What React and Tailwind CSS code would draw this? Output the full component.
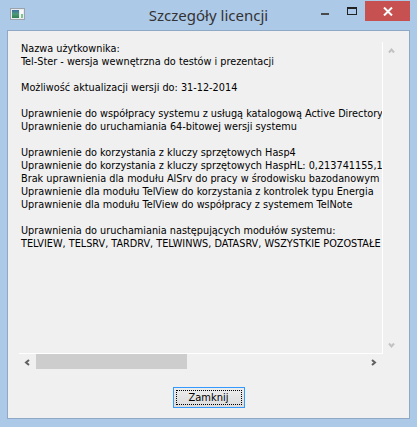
import React from "react";

const lines = [
  "Nazwa użytkownika:",
  "Tel-Ster - wersja wewnętrzna do testów i prezentacji",
  "",
  "Możliwość aktualizacji wersji do: 31-12-2014",
  "",
  "Uprawnienie do współpracy systemu z usługą katalogową Active Directory",
  "Uprawnienie do uruchamiania 64-bitowej wersji systemu",
  "",
  "Uprawnienie do korzystania z kluczy sprzętowych Hasp4",
  "Uprawnienie do korzystania z kluczy sprzętowych HaspHL: 0,213741155,1000000000",
  "Brak uprawnienia dla modułu AlSrv do pracy w środowisku bazodanowym Oracle",
  "Uprawnienie dla modułu TelView do korzystania z kontrolek typu Energia",
  "Uprawnienie dla modułu TelView do współpracy z systemem TelNote",
  "",
  "Uprawnienia do uruchamiania następujących modułów systemu:",
  "TELVIEW, TELSRV, TARDRV, TELWINWS, DATASRV, WSZYSTKIE POZOSTAŁE",
];

const Chevron = ({ dir, color }) => {
  const pts = {
    up: "1,5.5 3.5,2.5 6,5.5",
    down: "1,1.5 3.5,4.5 6,1.5",
    left: "5,1 2,3.5 5,6",
    right: "2,1 5,3.5 2,6",
  }[dir];
  return (
    <svg width="7" height="7" viewBox="0 0 7 7">
      <polyline points={pts} fill="none" stroke={color} strokeWidth="2" />
    </svg>
  );
};

export default function App() {
  return (
    <div
      className="w-[417px] h-[427px] bg-[#adc9e8] flex flex-col overflow-hidden"
      style={{ fontFamily: '"DejaVu Sans Condensed", "Liberation Sans", sans-serif' }}
    >
      {/* Title bar */}
      <div className="h-[30px] grid grid-cols-[1fr_auto_1fr] shrink-0">
        <div className="pl-[10px] pt-[8px] flex items-start">
          <svg width="15" height="12" viewBox="0 0 15 12">
            <rect x="0.5" y="0.5" width="14" height="11" fill="#e8ecef" stroke="#9aa3ab" />
            <defs>
              <linearGradient id="ig" x1="0" y1="0" x2="0" y2="1">
                <stop offset="0" stopColor="#3f6e9e" />
                <stop offset="0.5" stopColor="#4c9a78" />
                <stop offset="1" stopColor="#2f7e4f" />
              </linearGradient>
            </defs>
            <rect x="2" y="2" width="7" height="8" fill="url(#ig)" />
            <rect x="10" y="2" width="3" height="8" fill="#f7f9f9" />
            <rect x="11" y="6" width="2" height="4" fill="#7fc48c" />
          </svg>
        </div>
        <div
          className="text-[15px] leading-[30px] text-[#333333] pt-0"
          style={{ fontFamily: '"Noto Sans", "Open Sans", sans-serif' }}
        >
          Szczegóły licencji
        </div>
        <div className="flex justify-end items-start pr-[7px]">
          <div className="w-[26px] h-[20px] mt-[1px] flex justify-center pt-[12px]">
            <div className="w-[8px] h-[2px] bg-[#4a4a4a]" />
          </div>
          <div className="w-[27px] h-[20px] mt-[1px] flex justify-center pt-[6px]">
            <div className="w-[10px] h-[8px] border border-t-2 border-[#222222]" />
          </div>
          <div className="w-[45px] h-[20px] mt-[1px] bg-[#c75050] flex items-center justify-center">
            <svg width="10" height="9" viewBox="0 0 10 9">
              <path d="M1 0.5 L9 8.5 M9 0.5 L1 8.5" stroke="#ffffff" strokeWidth="2" />
            </svg>
          </div>
        </div>
      </div>

      {/* Client area */}
      <div className="mx-[7px] mb-[8px] flex-1 border border-[#8ea8c6] bg-[#f0f0f0] flex flex-col pl-[11px] pt-[11px]">
        <div className="w-[381px] flex flex-col">
          <div className="flex">
            <div className="w-[364px] h-[312px] border-r border-b border-white overflow-hidden pl-[2px] text-[10.8px] text-black">
              {lines.map((l, i) => (
                <div key={i} className="h-[13px] leading-[13px] whitespace-pre">
                  {l}
                </div>
              ))}
            </div>
            <div className="w-[17px] h-[312px] flex flex-col justify-between">
              <div className="h-[17px] flex items-center justify-center">
                <Chevron dir="up" color="#c2c2c2" />
              </div>
              <div className="h-[17px] flex items-center justify-center">
                <Chevron dir="down" color="#c2c2c2" />
              </div>
            </div>
          </div>
          <div className="w-[363px] h-[16px] flex items-stretch">
            <div className="w-[17px] flex items-center justify-center">
              <Chevron dir="left" color="#606060" />
            </div>
            <div className="flex-1 flex items-start">
              <div className="w-[151px] h-[15px] bg-[#cdcdcd]" />
            </div>
            <div className="w-[17px] flex items-center justify-center">
              <Chevron dir="right" color="#606060" />
            </div>
          </div>
        </div>
        <div className="flex justify-center pr-[11px] mt-[17px]">
          <div className="w-[72px] h-[21px] border border-[#3399ff] bg-gradient-to-b from-[#ededed] to-[#dcdcdc] p-[2px]">
            <div className="w-full h-full border border-dotted border-black flex items-center justify-center text-[11px] text-black leading-none">
              Zamknij
            </div>
          </div>
        </div>
      </div>
    </div>
  );
}
